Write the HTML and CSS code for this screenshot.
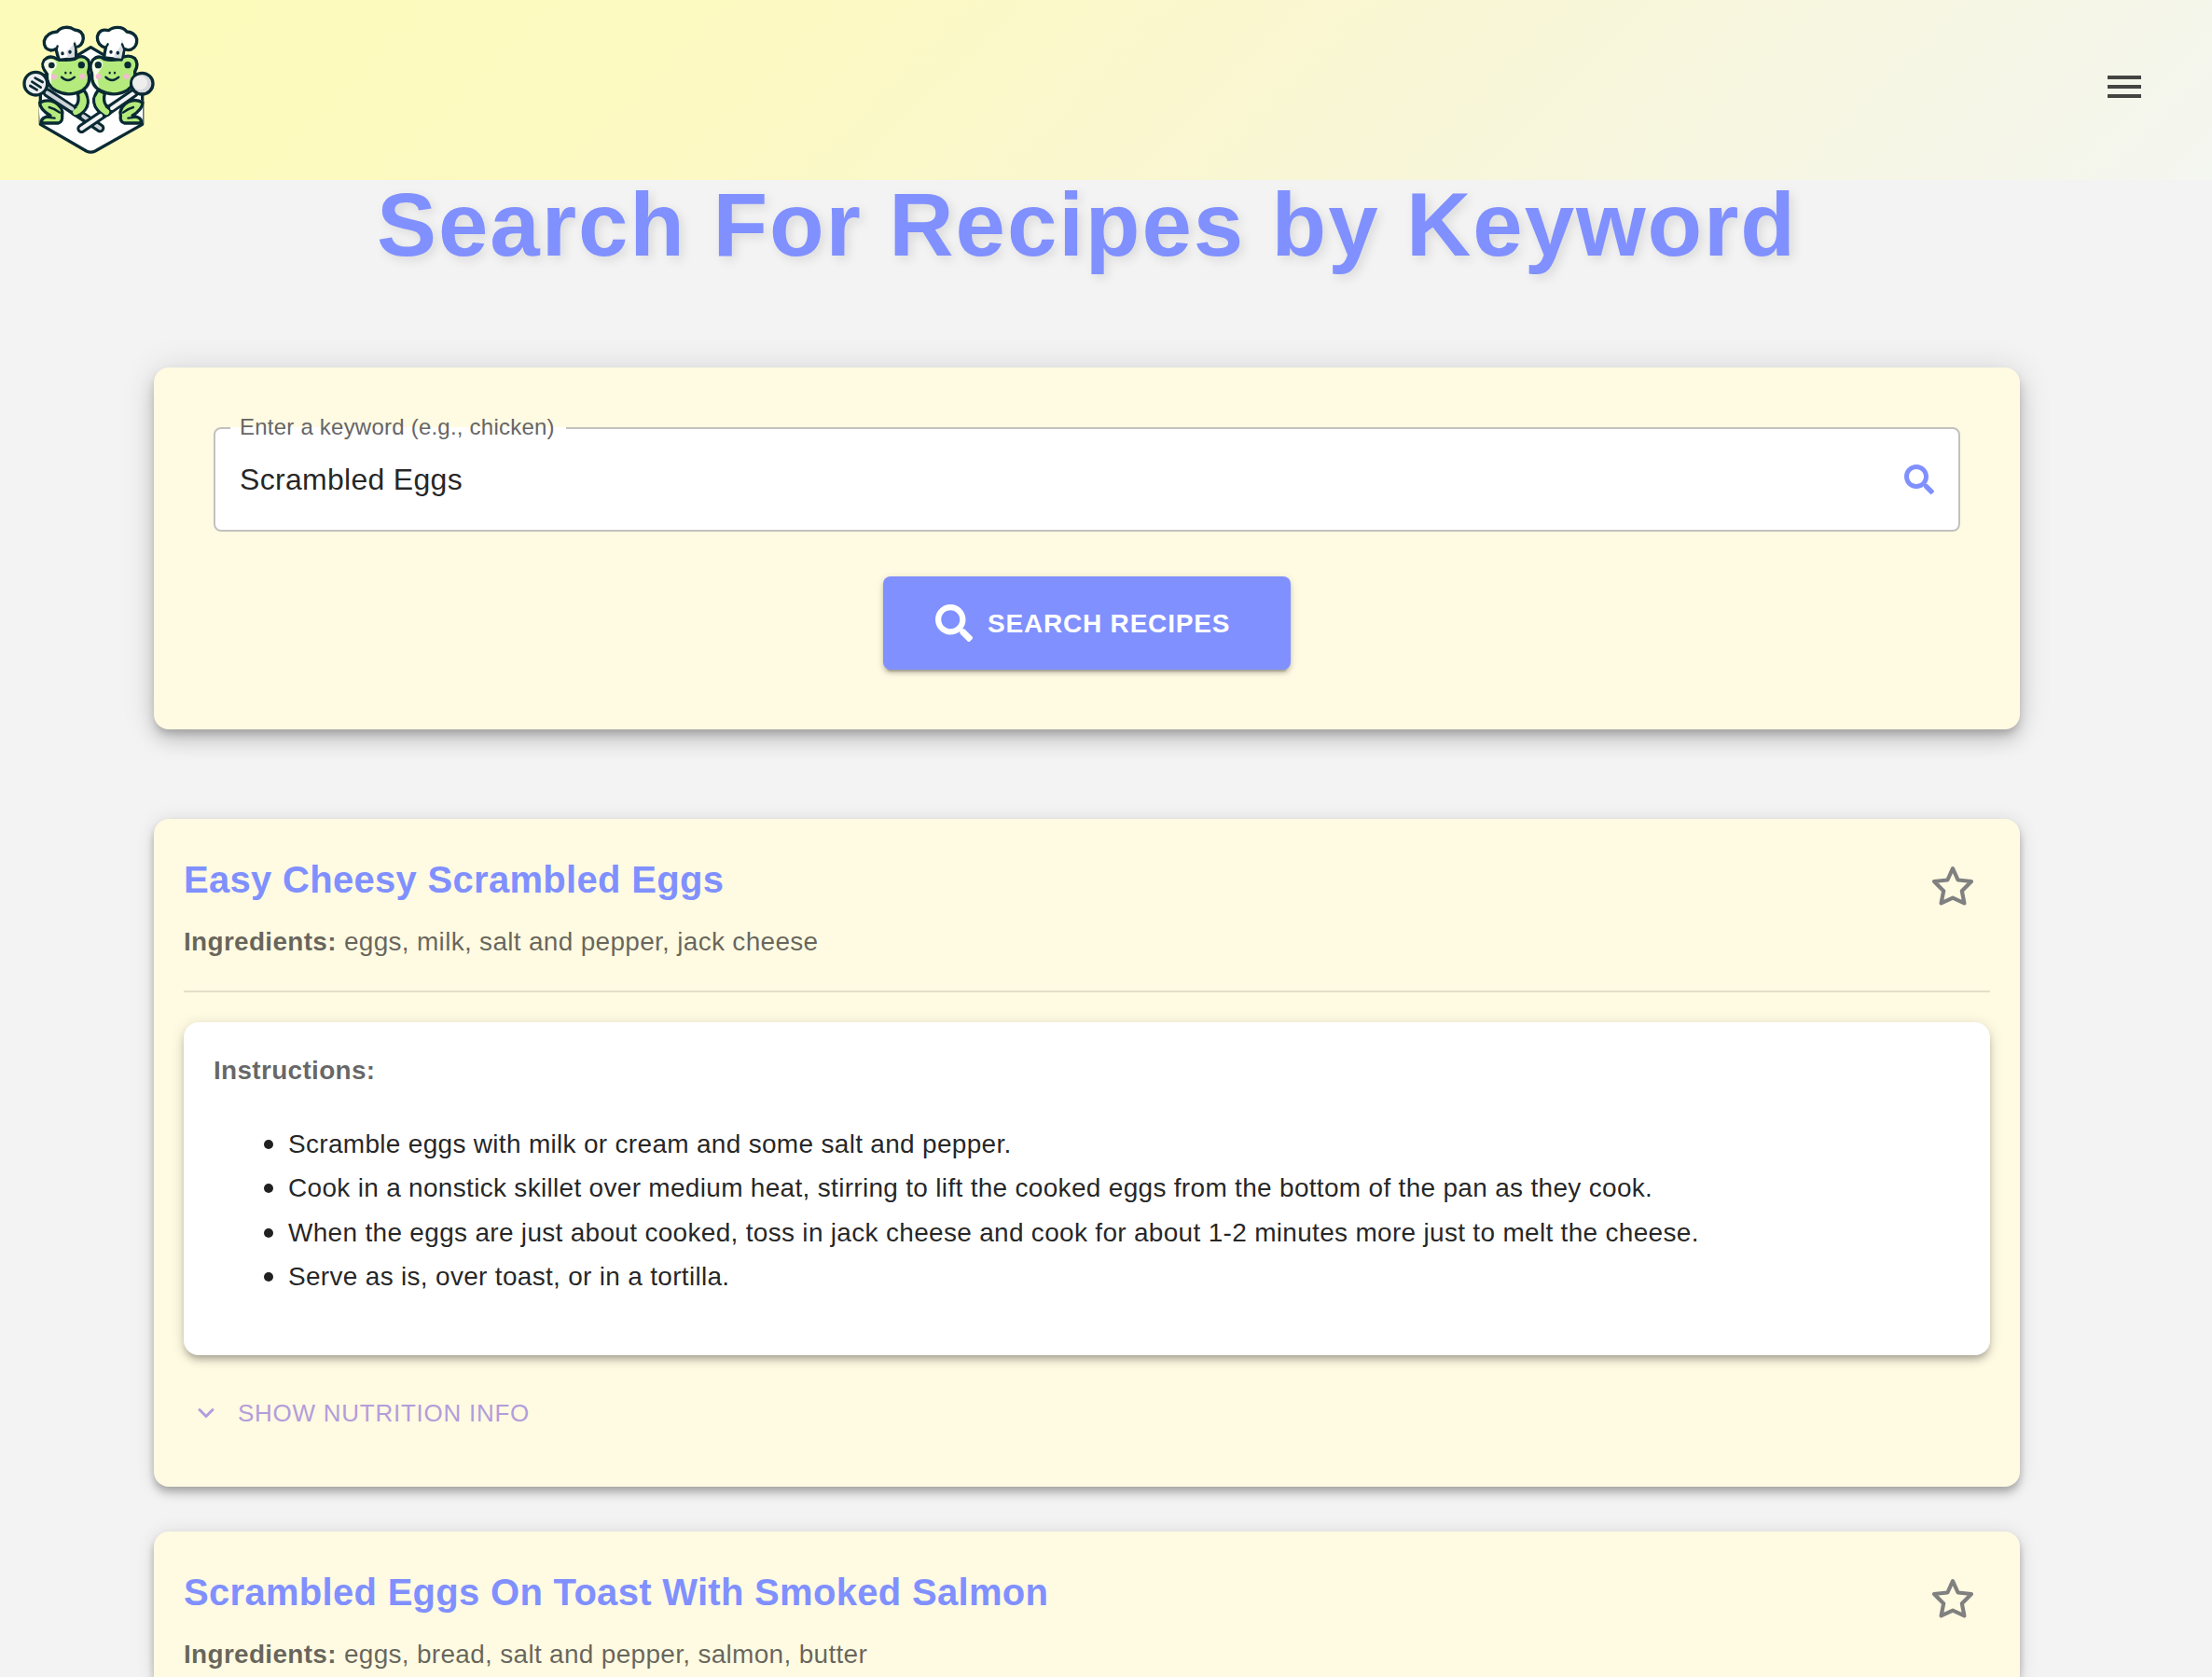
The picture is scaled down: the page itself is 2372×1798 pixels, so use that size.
FILE: index.html
```html
<!DOCTYPE html>
<html lang="en">
<head>
<meta charset="utf-8">
<title>Search For Recipes by Keyword</title>
<link rel="stylesheet" href="styles.css">
</head>
<body>
<svg class="defs" aria-hidden="true">
  <symbol id="search" viewBox="0 0 512 512"><path d="M505 442.7L405.3 343c-4.5-4.5-10.6-7-17-7H372c27.6-35.3 44-79.7 44-128C416 93.1 322.9 0 208 0S0 93.1 0 208s93.1 208 208 208c48.3 0 92.7-16.4 128-44v16.3c0 6.4 2.5 12.5 7 17l99.7 99.7c9.4 9.4 24.6 9.4 33.9 0l28.3-28.3c9.4-9.4 9.4-24.6.1-34zM208 336c-70.7 0-128-57.2-128-128 0-70.7 57.2-128 128-128 70.7 0 128 57.2 128 128 0 70.7-57.2 128-128 128z"/></symbol>
  <symbol id="star" viewBox="0 0 48 48"><path d="M24 5.2 29.6 17.5 44 19 33.8 29.2 36.4 42.4 24 36.7 11.6 42.4 14.2 29.2 4 19 18.4 17.5Z" fill="none" stroke="currentColor" stroke-width="4.2" stroke-linejoin="round"/></symbol>
  <symbol id="chevron" viewBox="0 0 18 12"><path d="M2 2.5 9 9.5 16 2.5" fill="none" stroke="currentColor" stroke-width="3" stroke-linecap="round"/></symbol>
</svg>
<header class="topbar">
  <svg class="logo" viewBox="60 60 450 450" stroke="#0a2a33" stroke-width="10" stroke-linejoin="round" stroke-linecap="round">
    <path d="M292 152 458 250V400L306 486Q292 493 278 486L130 400V250Z" fill="#fff"/>
    <g>
      <path d="M190 300Q165 300 155 318Q125 315 125 345L128 395H180Q200 395 198 375L240 380Q290 370 280 315L262 285Z" fill="#fff" stroke="none"/>
      <path d="M128 330Q150 318 175 328Q205 345 200 372Q202 392 188 396H134Q130 382 148 376L162 372Q128 352 128 330Z" fill="#b5eb7d"/>
      <path d="M158 345Q178 350 192 362M150 377 176 380" fill="none" stroke-width="7"/>
      <path d="M250 300Q256 325 246 338Q224 352 234 365Q246 376 262 364Q288 344 282 318Q280 302 270 290Z" fill="#b5eb7d"/>
      <path d="M152 238Q130 214 142 194Q160 174 184 190Q212 196 240 190Q266 172 284 194Q291 210 284 232Q296 270 266 290Q222 314 180 292Q148 276 152 238Z" fill="#b5eb7d"/>
      <path d="M150 226Q135 210 146 196Q164 184 180 198Q186 215 176 222Q160 230 166 272Q154 258 157 238Z" fill="#f6fbe8" stroke="none"/>
      <circle cx="166" cy="210" r="10" fill="#0a2a33" stroke="none"/>
      <circle cx="262" cy="209" r="11" fill="#0a2a33" stroke="none"/>
      <circle cx="174" cy="247" r="9" fill="#f4bcd2" stroke="none"/>
      <circle cx="265" cy="246" r="9" fill="#f4bcd2" stroke="none"/>
      <path d="M211 234V235M227 234V235" stroke-width="7"/>
      <path d="M198 248Q218 268 240 248" fill="none" stroke-width="7"/>
      <path d="M180 157Q184 176 190 193L244 187Q246 170 242 152Q265 150 268 124Q268 98 240 96Q226 86 210 88Q192 90 184 102Q150 104 142 132Q140 158 164 162Q174 162 180 157Z" fill="#fff"/>
      <path d="M214 164Q236 150 240 128Q252 148 240 154L240 184L218 187Z" fill="#d9dde2" stroke="none"/>
      <path d="M185 148 182 160M240 140 243 154" stroke-width="7"/>
      <path d="M201 171V173M225 166V168" stroke-width="10"/>
    </g>
    <g>
      <path d="M328 300 310 310Q288 320 308 350L340 372 460 395V325Q400 300 380 300Z" fill="#fff" stroke="none"/>
      <path d="M459 330Q435 316 412 328Q382 345 388 372Q385 392 400 396H454Q458 382 440 376L426 372Q458 352 459 330Z" fill="#b5eb7d"/>
      <path d="M429 345Q410 350 396 362M438 377 412 380" fill="none" stroke-width="7"/>
      <path d="M337 300Q331 325 341 338Q363 352 353 365Q341 376 325 364Q299 344 302 318Q306 302 316 290Z" fill="#b5eb7d"/>
      <path d="M296 238Q288 214 298 194Q316 174 336 190Q356 196 384 190Q412 172 434 188Q448 206 434 230Q438 270 410 290Q366 314 324 292Q292 276 296 238Z" fill="#b5eb7d"/>
      <path d="M298 226Q292 208 304 194Q320 188 330 200Q332 214 322 224Q306 240 320 284Q300 266 302 240Z" fill="#f6fbe8" stroke="none"/>
      <circle cx="316" cy="209" r="11" fill="#0a2a33" stroke="none"/>
      <circle cx="411" cy="209" r="11" fill="#0a2a33" stroke="none"/>
      <circle cx="317" cy="246" r="9" fill="#f4bcd2" stroke="none"/>
      <circle cx="407" cy="246" r="9" fill="#f4bcd2" stroke="none"/>
      <path d="M353 234V235M369 234V235" stroke-width="7"/>
      <path d="M340 248Q360 268 382 248" fill="none" stroke-width="7"/>
      <path d="M340 154Q336 170 335 186L391 192Q398 174 399 157Q412 164 424 158Q442 148 440 126Q434 104 408 102Q398 88 378 88Q360 88 350 98Q320 90 313 118Q312 146 340 154Z" fill="#fff"/>
      <path d="M370 170Q392 150 392 126Q402 148 396 160L390 188 366 186Z" fill="#d9dde2" stroke="none"/>
      <path d="M340 154 347 142M399 157 393 142" stroke-width="7"/>
      <path d="M357 166V168M379 169V171" stroke-width="10"/>
    </g>
    <path d="M152 298 322 412" fill="none" stroke-width="30"/>
    <path d="M152 298 232 350M268 374 322 412" fill="none" stroke="#cfd4da" stroke-width="12"/>
    <path d="M432 298 262 414" fill="none" stroke-width="30"/>
    <path d="M432 298 360 348M324 372 262 414" fill="none" stroke="#f2f3f4" stroke-width="12"/>
    <path d="M268 318Q272 346 244 360M316 318Q316 344 342 360" fill="none" stroke="#b5eb7d" stroke-width="19"/>
    <circle cx="115" cy="269" r="37" fill="#eceef0"/>
    <path d="M113 251 137 264M103 263 131 281M97 276 119 289" stroke-width="8"/>
    <ellipse cx="457" cy="269" rx="35" ry="34" fill="#d5d8de"/>
    <ellipse cx="450" cy="266" rx="24" ry="23" fill="#eeeeed" stroke="none"/>
  </svg>
  <svg class="menu" viewBox="0 0 24 24"><path d="M3 18h18v-2H3v2zm0-5h18v-2H3v2zm0-7v2h18V6H3z"/></svg>
</header>
<main class="page">
  <h1 class="heading">Search For Recipes by Keyword</h1>
  <section class="search-card">
    <fieldset class="field">
      <legend class="field-label">Enter a keyword (e.g., chicken)</legend>
      <div class="field-row">
        <span class="field-value">Scrambled Eggs</span>
        <svg class="field-icon"><use href="#search"/></svg>
      </div>
    </fieldset>
    <button class="search-button"><svg class="button-icon"><use href="#search"/></svg><span>Search Recipes</span></button>
  </section>
  <section class="results">
    <article class="recipe">
      <div class="recipe-head">
        <div>
          <h2 class="recipe-title">Easy Cheesy Scrambled Eggs</h2>
          <p class="ingredients"><b>Ingredients:</b> eggs, milk, salt and pepper, jack cheese</p>
        </div>
        <svg class="star"><use href="#star"/></svg>
      </div>
      <hr class="divider">
      <div class="instructions">
        <p class="instructions-title">Instructions:</p>
        <ul class="steps">
          <li>Scramble eggs with milk or cream and some salt and pepper.</li>
          <li>Cook in a nonstick skillet over medium heat, stirring to lift the cooked eggs from the bottom of the pan as they cook.</li>
          <li>When the eggs are just about cooked, toss in jack cheese and cook for about 1-2 minutes more just to melt the cheese.</li>
          <li>Serve as is, over toast, or in a tortilla.</li>
        </ul>
      </div>
      <button class="nutrition"><svg class="chevron"><use href="#chevron"/></svg><span>Show Nutrition Info</span></button>
    </article>
    <article class="recipe recipe-cut">
      <div class="recipe-head">
        <div>
          <h2 class="recipe-title">Scrambled Eggs On Toast With Smoked Salmon</h2>
          <p class="ingredients"><b>Ingredients:</b> eggs, bread, salt and pepper, salmon, butter</p>
        </div>
        <svg class="star"><use href="#star"/></svg>
      </div>
    </article>
  </section>
</main>
</body>
</html>
```
FILE: styles.css
```css
* { box-sizing: border-box; }

body {
  margin: 0;
  height: 1798px;
  overflow: hidden;
  background: #f3f3f3;
  color: rgba(0, 0, 0, 0.87);
  font-family: "Liberation Sans", Arial, sans-serif;
}

h1, h2, p, ul { margin: 0; }

.defs { display: none; }

.topbar {
  display: flex;
  align-items: flex-start;
  justify-content: space-between;
  height: 193px;
  padding: 20px 70px 0 20px;
  background: linear-gradient(135deg, #fdfbb9 0%, #fcf9c3 35%, #f9f6d4 60%, #f4f6f0 100%);
}

.logo { width: 150px; height: 150px; }

.menu {
  width: 48px;
  height: 48px;
  margin-top: 49px;
  fill: rgba(0, 0, 0, 0.72);
}

.page { width: 2001px; margin-left: 165px; }

.heading {
  line-height: 96px;
  font-size: 96px;
  font-weight: 700;
  letter-spacing: 1.92px;
  text-align: center;
  color: #8090ff;
  text-shadow: 4px 4px 12px rgba(0, 0, 0, 0.1);
}

.search-card {
  display: flex;
  flex-direction: column;
  align-items: center;
  gap: 48px;
  height: 388px;
  margin-top: 105px;
  padding: 64px;
  border-radius: 16px;
  background: #fffae2;
  box-shadow: 0 6px 10px -2px rgba(0, 0, 0, 0.2), 0 12px 20px 0 rgba(0, 0, 0, 0.14), 0 2px 36px 0 rgba(0, 0, 0, 0.12);
}

.field {
  width: 100%;
  height: 112px;
  margin: 0;
  padding: 0 26px;
  border: 2px solid #c3c1bd;
  border-radius: 8px;
  background: #fff;
}

.field-label {
  height: 2px;
  margin-left: -10px;
  padding: 0 12px 0 10px;
  line-height: 0;
  font-size: 24px;
  letter-spacing: 0.225px;
  color: #666;
}

.field-row {
  display: flex;
  align-items: center;
  justify-content: space-between;
  height: 108px;
}

.field-value { font-size: 32px; letter-spacing: 0.3px; }

.field-icon { width: 32px; height: 32px; fill: #8090ff; }

.search-button {
  display: flex;
  align-items: center;
  gap: 16px;
  width: 437px;
  height: 100px;
  padding: 0 56px;
  border: 0;
  border-radius: 8px;
  background: #8090ff;
  color: #fff;
  font: 700 28px "Liberation Sans", Arial, sans-serif;
  letter-spacing: 0.8px;
  text-transform: uppercase;
  white-space: nowrap;
  box-shadow: 0 6px 2px -4px rgba(0, 0, 0, 0.2), 0 4px 4px 0 rgba(0, 0, 0, 0.14), 0 2px 10px 0 rgba(0, 0, 0, 0.12);
}

.search-button span { padding-top: 2px; }

.button-icon { width: 40px; height: 40px; fill: #fff; }

.results {
  display: flex;
  flex-direction: column;
  gap: 48px;
  margin-top: 96px;
}

.recipe {
  height: 716px;
  padding: 38px 32px 0;
  border-radius: 16px;
  background: #fffae2;
  box-shadow: 0 4px 8px -2px rgba(0, 0, 0, 0.2), 0 8px 10px 0 rgba(0, 0, 0, 0.14), 0 2px 20px 0 rgba(0, 0, 0, 0.12);
}

.recipe-cut {
  height: 156px;
  border-radius: 16px 16px 0 0;
}

.recipe-head {
  display: flex;
  justify-content: space-between;
  padding-right: 16px;
}

.recipe-title {
  line-height: 54px;
  font-size: 40px;
  letter-spacing: 0.3px;
  color: #8090ff;
}

.ingredients {
  margin-top: 20px;
  line-height: 40px;
  font-size: 28px;
  letter-spacing: 0.3px;
  color: rgba(0, 0, 0, 0.6);
}

.star { width: 48px; height: 48px; margin-top: 10px; color: #808080; }

.divider {
  height: 2px;
  margin: 32px 0;
  border: 0;
  background: #e3dec8;
}

.instructions {
  height: 357px;
  padding: 32px;
  border-radius: 16px;
  background: #fff;
  box-shadow: 0 6px 6px -4px rgba(0, 0, 0, 0.2), 0 6px 8px 0 rgba(0, 0, 0, 0.14), 0 2px 16px 0 rgba(0, 0, 0, 0.12);
}

.instructions-title {
  line-height: 40px;
  font-size: 28px;
  font-weight: 700;
  letter-spacing: 0.3px;
  color: rgba(0, 0, 0, 0.6);
}

.steps {
  margin-top: 34.6px;
  padding-left: 80px;
  line-height: 47.6px;
  font-size: 28px;
  letter-spacing: 0.305px;
  list-style: none;
}

.steps li { position: relative; }

/* round bullet hanging left of each step */
.steps li::before {
  content: "";
  position: absolute;
  left: -26px;
  top: 19px;
  width: 10px;
  height: 10px;
  border-radius: 50%;
  background: #212121;
}

.nutrition {
  display: flex;
  align-items: center;
  gap: 25px;
  height: 46px;
  margin-top: 39px;
  padding: 0 15px;
  border: 0;
  background: none;
  color: #b39ddb;
  font: 26px "Liberation Sans", Arial, sans-serif;
  letter-spacing: 0.74px;
  text-transform: uppercase;
}

.chevron { width: 18px; height: 12px; }
```
